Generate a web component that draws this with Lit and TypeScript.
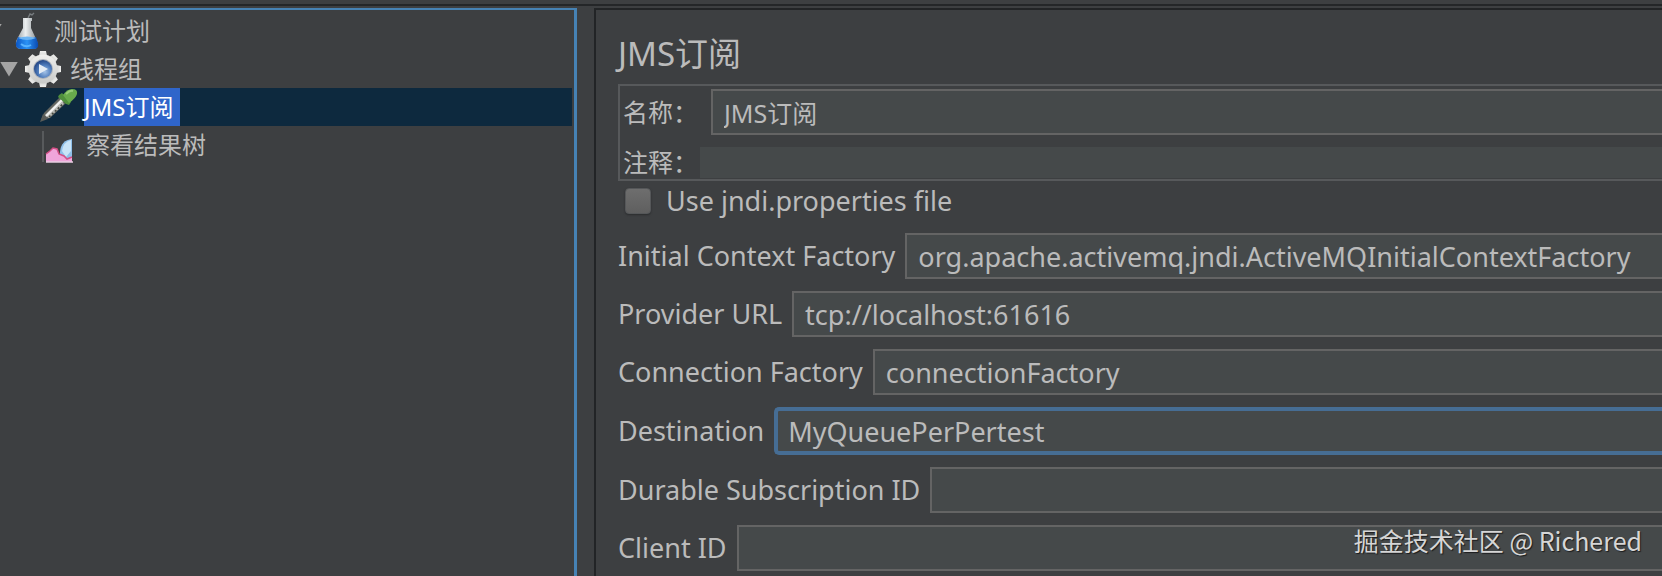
import { LitElement, html, css, svg, TemplateResult } from "lit";
import { customElement, property } from "lit/decorators.js";
import { classMap } from "lit/directives/class-map.js";

const flask = svg`
  <defs>
    <linearGradient id="glass" x1="0" x2="1"><stop offset="0" stop-color="#8f979c"/><stop offset=".45" stop-color="#eceff0"/><stop offset="1" stop-color="#858c90"/></linearGradient>
    <linearGradient id="liquid" x1="0" x2="1"><stop offset="0" stop-color="#0b55c4"/><stop offset=".5" stop-color="#2b93f5"/><stop offset="1" stop-color="#0a49ae"/></linearGradient>
  </defs>
  <path d="M19 6l2-4 2 1 2-2" fill="none" stroke="#777c7f" stroke-width="1.4"/>
  <path d="M14 6h9v3h-1v7l6 13q2 6-2 8H11q-5-1-4-8l7-13z" fill="url(#glass)"/>
  <path d="M9 25q9 3 18 0l2 6q1 6-4 6H11q-5-1-4-6z" fill="url(#liquid)"/>
  <path d="M9 26q9-3 18 0-9 4-18 0z" fill="#6ab4f4"/>
  <path d="M12 32q5 4 10 1" fill="none" stroke="#56b2ff" stroke-width="2"/>`;

const gear = svg`
  <defs>
    <linearGradient id="metal" x1="0" y1="0" x2="0" y2="1"><stop offset="0" stop-color="#efefed"/><stop offset="1" stop-color="#c9cac8"/></linearGradient>
    <radialGradient id="disc" cx=".6" cy=".65" r=".65"><stop offset="0" stop-color="#a6c4e8"/><stop offset=".55" stop-color="#4f7dbd"/><stop offset="1" stop-color="#234787"/></radialGradient>
  </defs>
  <g fill="url(#metal)">
    ${[0, 45, 90, 135, 180, 225, 270, 315].map(
      (a) => svg`<path d="M13.500 8L15 1h6L22.500 8z" transform="rotate(${a} 18 19)"/>`
    )}
    <circle cx="18" cy="19" r="14.500"/>
  </g>
  <circle cx="18" cy="19" r="10" fill="#a9b0ba"/>
  <circle cx="18" cy="19" r="9" fill="url(#disc)"/>
  <path d="M14 14l9 5-9 5z" fill="#e3ebf4"/>`;

const dropper = svg`
  <path d="M0 32l3-7L19 9l6 6L9 30z" fill="#63655f"/>
  <path d="M4 27L20 11l4 4L8 30z" fill="#b9bbb6"/>
  <path d="M5 28L21 12" stroke="#f3f3f1" stroke-width="2"/>
  <path d="M8 29L24 14" stroke="#44463f" stroke-width="1.600" stroke-dasharray="2 2"/>
  <path d="M-1 34l3-8 5 5z" fill="#5a5c58"/>
  <path d="M18 7l3-2 9 9-2 3-3-1-8-7z" fill="#4f8f3c"/>
  <path d="M22 7q4-6 9-6 6 0 5 5-1 4-8 9z" fill="#68ab4c"/>
  <path d="M25 6q4-4 7-3" fill="none" stroke="#95cb76" stroke-width="2"/>`;

const chart = svg`
  <path d="M2 5v31" stroke="#626466" stroke-width="1.500"/>
  <path d="M19 26q1-12 12-13v23H19z" fill="#8fbfe9"/>
  <path d="M21 25q1-9 9-11v11l-5 6z" fill="#c8e3f7"/>
  <path d="M5 36v-8l4-3 3-3 4 1 2 5 5 2 3 3 5-2v5z" fill="#f0a5da"/>
  <path d="M5 28l4-3 3-3 4 1 2 5 5 2 3 3 5-2" fill="none" stroke="#d34f86" stroke-width="1.500"/>
  <path d="M5 36h27" stroke="#e9cfe2" stroke-width="1.500"/>`;

@customElement("plan-tree")
class PlanTree extends LitElement {
  static styles = css`
    :host {
      display: block;
      border: solid #4682b4;
      border-width: 2px 3px 0 0;
      padding-top: 2px;
      overflow: hidden;
      box-sizing: border-box;
    }
    ul {
      list-style: none;
      margin: 0;
      padding: 0;
    }
    .row {
      display: flex;
      align-items: center;
      height: 38px;
      font-size: 24px;
      color: #bbbbbb;
    }
    .root {
      margin-left: -16px;
    }
    .leaf {
      padding-left: 16px;
      margin-right: 2px;
    }
    .selected {
      background: #0d293e;
      color: #ffffff;
    }
    .toggle {
      appearance: none;
      width: 18px;
      height: 15px;
      margin: 0 7px 0 0;
      padding: 0;
      border: 0;
      background: #a4a4a4;
      clip-path: polygon(0 0, 100% 0, 50% 100%);
    }
    .hidden {
      visibility: hidden;
    }
    svg {
      width: 36px;
      height: 38px;
      flex: none;
      overflow: visible;
      margin-right: 9px;
    }
    .selected svg {
      margin-right: 7px;
    }
    .name {
      line-height: 38px;
      white-space: nowrap;
    }
    .selected .name {
      background: #2f65ca;
      padding-right: 6px;
    }
  `;

  private item(name: string, icon: TemplateResult, level: "root" | "group" | "leaf", selected = false) {
    return html`<li class=${classMap({ row: true, [level]: true, selected })} role="treeitem" aria-selected=${selected}>
      <button class=${classMap({ toggle: true, hidden: level === "leaf" })} aria-label="展开"></button>
      <svg viewBox="0 0 36 38" aria-hidden="true">${icon}</svg>
      <span class="name">${name}</span>
    </li>`;
  }

  render() {
    return html`<ul role="tree">
      ${this.item("测试计划", flask, "root")}
      ${this.item("线程组", gear, "group")}
      ${this.item("JMS订阅", dropper, "leaf", true)}
      ${this.item("察看结果树", chart, "leaf")}
    </ul>`;
  }
}

@customElement("form-row")
class FormRow extends LitElement {
  @property() label = "";
  @property() value = "";
  @property({ type: Boolean }) active = false;

  static styles = css`
    :host {
      display: flex;
    }
    label {
      display: flex;
      flex: 1;
      align-items: center;
      gap: 10px;
      white-space: nowrap;
    }
    input {
      flex: 1;
      min-width: 0;
      height: 46px;
      box-sizing: border-box;
      margin: 0;
      padding: 0 11px;
      border: 2px solid #646464;
      border-right: 0;
      border-radius: 0;
      outline: 0;
      background: #45494a;
      color: #bbbbbb;
      font: inherit;
    }
    .active {
      height: 48px;
      padding: 0 10px;
      border: 4px solid #466d94;
      border-right: 0;
      border-radius: 5px 0 0 5px;
    }
  `;

  render() {
    return html`<label>${this.label}<input class=${classMap({ active: this.active })} type="text" .value=${this.value} /></label>`;
  }
}

@customElement("app-root")
class AppRoot extends LitElement {
  static styles = css`
    :host {
      display: flex;
      flex-direction: column;
      height: 100vh;
      overflow: hidden;
      position: relative;
      background: #3d3f41;
      color: #bbbbbb;
      font-family: "Noto Sans", "Noto Sans CJK SC", sans-serif;
      font-size: 27px;
      line-height: 36px;
    }
    .toolbar {
      height: 4px;
      border-bottom: 2px solid #242628;
      margin-bottom: 2px;
      flex: none;
    }
    .split {
      flex: 1;
      min-height: 0;
      display: grid;
      grid-template-columns: 577fr 1068fr;
      gap: 17px;
    }
    .editor {
      border: solid #222426;
      border-width: 2px 0 0 2px;
      padding: 24px 0 0 22px;
      min-width: 0;
      overflow: hidden;
    }
    h1 {
      margin: 0 0 10px;
      font-size: 33px;
      font-weight: 400;
      line-height: 40px;
    }
    .naming {
      display: grid;
      grid-template-columns: auto 1fr;
      box-sizing: border-box;
      border: solid #57595b;
      border-width: 2px 0 2px 2px;
      padding: 3px 0 1px 3px;
      row-gap: 12px;
      align-items: center;
      font-size: 25px;
      line-height: 31px;
    }
    .naming label {
      width: 77px;
      white-space: nowrap;
    }
    .naming input {
      min-width: 0;
      box-sizing: border-box;
      border: 0;
      margin: 0;
      padding: 0 11px;
      outline: 0;
      background: #45494a;
      color: #bbbbbb;
      font: inherit;
    }
    .naming .title {
      height: 46px;
      margin-left: 11px;
      border: 2px solid #646464;
      border-right: 0;
    }
    .naming .comment {
      height: 31px;
    }
    .check {
      display: flex;
      align-items: center;
      gap: 15px;
      height: 40px;
      margin-bottom: 12px;
      padding-left: 7px;
    }
    .check input {
      appearance: none;
      width: 26px;
      height: 26px;
      margin: 0;
      border-radius: 4px;
      border: 1px solid #555759;
      background: linear-gradient(#6e6e6e, #5f5f5f);
      box-shadow: 0 1px 2px #2b2d2e;
    }
    .rows {
      display: flex;
      flex-direction: column;
      gap: 12px;
    }
    .credit {
      position: absolute;
      right: 20px;
      bottom: 18px;
      font-family: "Noto Sans CJK SC", sans-serif;
      font-size: 25px;
      color: #d6d6d6;
      text-shadow: 1px 1px 1px #1b1c1d;
    }
  `;

  render() {
    return html`
      <div class="toolbar"></div>
      <div class="split">
        <plan-tree></plan-tree>
        <main class="editor">
          <h1>JMS订阅</h1>
          <div class="naming">
            <label for="title">名称：</label>
            <input id="title" class="title" type="text" .value=${"JMS订阅"} />
            <label for="comment">注释：</label>
            <input id="comment" class="comment" type="text" />
          </div>
          <label class="check"><input type="checkbox" />Use jndi.properties file</label>
          <div class="rows">
            <form-row label="Initial Context Factory" value="org.apache.activemq.jndi.ActiveMQInitialContextFactory"></form-row>
            <form-row label="Provider URL" value="tcp://localhost:61616"></form-row>
            <form-row label="Connection Factory" value="connectionFactory"></form-row>
            <form-row label="Destination" value="MyQueuePerPertest" active></form-row>
            <form-row label="Durable Subscription ID"></form-row>
            <form-row label="Client ID"></form-row>
          </div>
        </main>
      </div>
      <div class="credit">掘金技术社区 @ Richered</div>
    `;
  }
}
